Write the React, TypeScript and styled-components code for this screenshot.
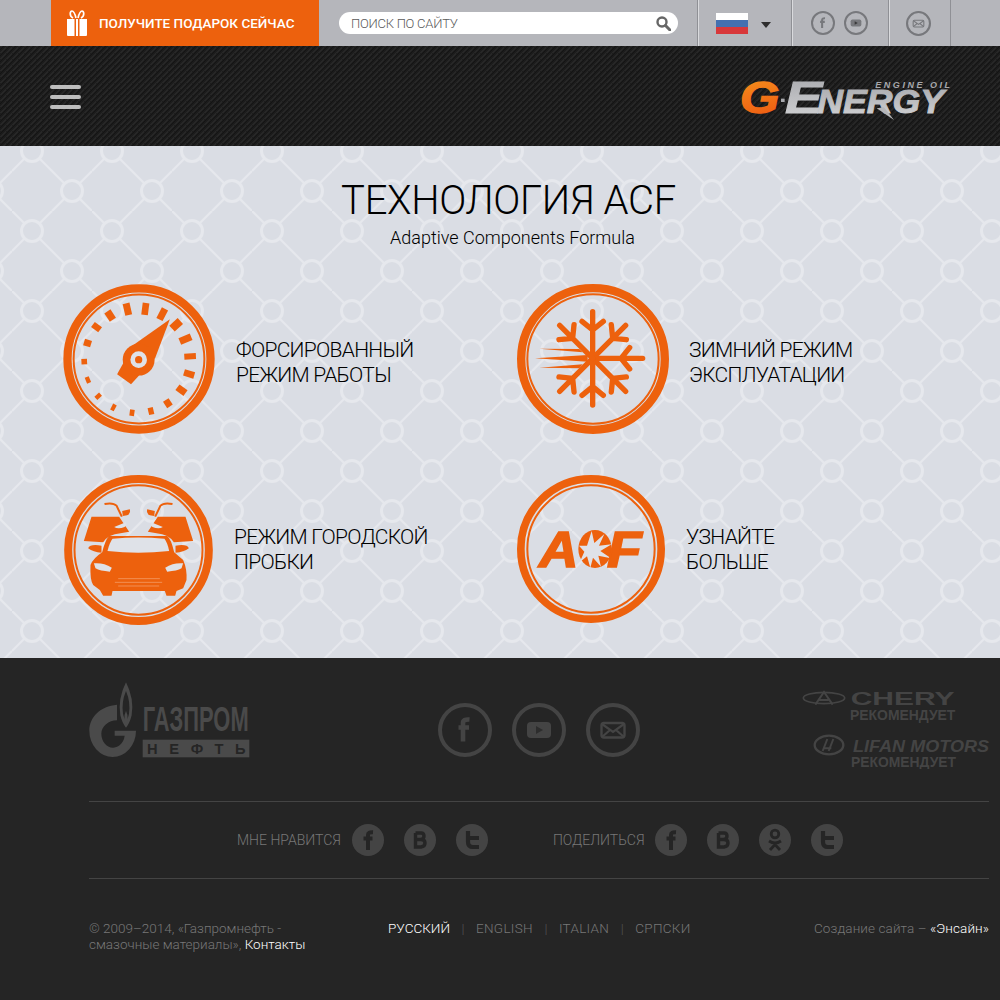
import React from "react";
import styled, { createGlobalStyle } from "styled-components";

const svgUri = (s: string) => `url("data:image/svg+xml,${encodeURIComponent(s)}")`;

const lattice = svgUri(
  `<svg xmlns="http://www.w3.org/2000/svg" width="80" height="80"><g stroke="#e6e8ed" stroke-width="2.2" fill="none"><path d="M0 0L80 80M0 40L40 0M40 80L80 40"/><circle cx="20" cy="20" r="10.5" fill="#dadde4" stroke-width="3"/><circle cx="60" cy="60" r="10.5" fill="#dadde4" stroke-width="3"/></g></svg>`
);

const carbon = svgUri(
  `<svg xmlns="http://www.w3.org/2000/svg" width="6" height="6" shape-rendering="crispEdges"><rect width="6" height="6" fill="#1c1c1c"/><g fill="#272727"><rect x="0" y="0" width="2" height="1"/><rect x="5" y="1" width="2" height="1"/><rect x="4" y="2" width="2" height="1"/><rect x="3" y="3" width="2" height="1"/><rect x="2" y="4" width="2" height="1"/><rect x="1" y="5" width="2" height="1"/></g><g fill="#141414"><rect x="3" y="0" width="1" height="1"/><rect x="2" y="1" width="1" height="1"/><rect x="1" y="2" width="1" height="1"/><rect x="0" y="3" width="1" height="1"/><rect x="5" y="4" width="1" height="1"/><rect x="4" y="5" width="1" height="1"/></g></svg>`
);

const GlobalStyle = createGlobalStyle`
  html, body { margin: 0; padding: 0; background: #252525; }
  body { font-family: "Roboto", "Liberation Sans", sans-serif; }
  * { box-sizing: border-box; }
`;

const Page = styled.div`
  width: 1000px;
  height: 1000px;
  overflow: hidden;
`;

const TopBar = styled.div`
  display: flex;
  height: 46px;
  padding-left: 51px;
  background: #b5b6bb;
`;

const Promo = styled.a`
  display: flex;
  align-items: center;
  gap: 11px;
  width: 268px;
  padding-left: 15px;
  background: #ed610d;
  color: #fff;
  font-size: 13.5px;
  font-weight: 500;
  white-space: nowrap;
`;

const Search = styled.div`
  display: flex;
  align-items: center;
  justify-content: space-between;
  width: 339px;
  height: 22px;
  margin: 12px 19px 0 20px;
  padding: 0 7px 0 12px;
  border-radius: 11px;
  background: #fff;
  color: #5a5a5a;
  font-size: 13px;
  font-weight: 300;
  letter-spacing: -0.25px;
`;

const Cell = styled.div<{ $w: number; $gap?: number }>`
  display: flex;
  align-items: center;
  justify-content: center;
  gap: ${(p) => p.$gap ?? 0}px;
  width: ${(p) => p.$w}px;
  padding-right: 2px;
  border-left: 1px solid #8f9095;
  box-shadow: inset 1px 0 0 #d9dadd;
  color: #77787c;
`;

const EndCell = styled(Cell)`
  border-right: 1px solid #8f9095;
`;

const Flag = styled.div`
  width: 32px;
  height: 21px;
  margin: 0 1px 0 -1px;
  background: linear-gradient(#fff 0 33.3%, #4470b0 33.3% 66.6%, #d8383a 66.6%);
`;

const Caret = styled.div`
  width: 0;
  height: 0;
  margin-top: 3px;
  border-left: 5.5px solid transparent;
  border-right: 5.5px solid transparent;
  border-top: 6px solid #2e2e2e;
`;

const Header = styled.header`
  display: flex;
  align-items: center;
  justify-content: space-between;
  height: 100px;
  padding: 0 40px 0 50px;
  background: #1b1b1b ${carbon};
`;

const Burger = styled.div`
  display: flex;
  flex-direction: column;
  gap: 6px;
  width: 31px;
  margin-top: 2px;
`;

const BurgerBar = styled.span`
  height: 4px;
  border-radius: 2px;
  background: #bdbdbd;
`;

const LogoSvg = styled.svg`
  width: 230px;
  height: 60px;
  margin-top: 8px;
`;

const Main = styled.main`
  height: 512px;
  padding-top: 32px;
  background: #dadde4 ${lattice} 12px -15px;
  color: #000;
  text-align: center;
`;

const Title = styled.h1`
  margin: 0;
  padding-left: 17px;
  font-size: 40px;
  line-height: 46px;
  font-weight: 300;
  letter-spacing: -0.3px;
`;

const Subtitle = styled.p`
  margin: 2px 0 0;
  padding-left: 25px;
  font-size: 18px;
  line-height: 24px;
  font-weight: 300;
`;

const Grid = styled.div`
  display: grid;
  grid-template-columns: 454px 454px;
  row-gap: 41px;
  margin-top: 34px;
  padding-left: 63px;
  text-align: left;
`;

const Feature = styled.div<{ $offset?: number; $gap?: number }>`
  display: flex;
  align-items: center;
  gap: ${(p) => p.$gap ?? 21}px;
  height: 150px;
  margin-left: ${(p) => p.$offset ?? 0}px;
`;

const FeatureLabel = styled.div<{ $drop?: number }>`
  margin-top: ${(p) => p.$drop ?? 0}px;
  font-size: 21px;
  line-height: 25px;
  font-weight: 300;
  letter-spacing: -0.7px;
`;

const AcfSvg = styled.svg`
  width: 148px;
  height: 148px;
  margin-bottom: 2px;
`;

const Footer = styled.footer`
  height: 342px;
  padding: 0 11px 0 89px;
  background: #252525;
  color: #6e6e6e;
`;

const Partners = styled.div`
  display: grid;
  grid-template-columns: 349px 1fr auto;
  height: 144px;
  border-bottom: 1px solid #444;
`;

const GazpromLogo = styled.svg`
  width: 161px;
  height: 76px;
  margin-top: 24px;
`;

const BigSocials = styled.div`
  display: flex;
  gap: 20px;
  margin-top: 45px;
  color: #444;
`;

const Brands = styled.div`
  display: flex;
  flex-direction: column;
  align-items: flex-end;
  width: 190px;
  margin-top: 30px;
  margin-right: -1px;
`;

const CherySvg = styled.svg`
  width: 160px;
  height: 36px;
  margin-right: 30px;
`;

const LifanSvg = styled.svg`
  width: 178px;
  height: 36px;
  margin-top: 9px;
`;

const Shares = styled.div`
  display: flex;
  align-items: center;
  height: 77px;
  padding-left: 148px;
  border-bottom: 1px solid #444;
`;

const ShareLabel = styled.span<{ $left?: number }>`
  margin-left: ${(p) => p.$left ?? 0}px;
  margin-right: 11px;
  font-size: 14px;
  font-weight: 300;
  color: #777;
`;

const Round = styled.span`
  display: flex;
  align-items: center;
  justify-content: center;
  width: 32px;
  height: 32px;
  margin-right: 20px;
  border-radius: 50%;
  background: #444;
  color: #252525;
`;

const Bottom = styled.div`
  display: grid;
  grid-template-columns: 299px 1fr auto;
  padding-top: 41px;
  font-size: 13.5px;
  line-height: 16px;
  font-weight: 300;
  color: #777;
`;

const Copy = styled.div`
  width: 225px;
`;

const Credit = styled.div`
  letter-spacing: 0.1px;
`;

const White = styled.span`
  color: #fff;
`;

const Langs = styled.div`
  display: flex;
  gap: 11.5px;
`;

const Lang = styled.span<{ $active?: boolean }>`
  color: ${(p) => (p.$active ? "#fff" : "#777")};
  letter-spacing: ${(p) => (p.$active ? 0 : 0.3)}px;
`;

const Sep = styled.span`
  color: #555;
`;

const ORANGE = "#ed610d";
const HOLE = "#dfe2e8";

const Ring: React.FC<{ cx: number; cy: number; rx: number; ry: number; band: number; thin: number }> = ({ cx, cy, rx, ry, band, thin }) => (
  <>
    <ellipse cx={cx} cy={cy} rx={rx - band / 2} ry={ry - band / 2} fill="none" stroke={ORANGE} strokeWidth={band} />
    <ellipse cx={cx} cy={cy} rx={rx - thin} ry={ry - thin} fill="none" stroke={ORANGE} strokeWidth={6} />
  </>
);

const ticks: [number, number, number, number][] = [
  [115, 315, 13, 19], [146, 364, 19, 13], [192, 398, 20, 12], [248, 414, 19, 14], [305, 409, 21, 16],
  [356, 385, 23, 20], [397, 346, 30, 21], [420, 297, 32, 20], [423, 244, 35, 18], [409, 192, 37, 21],
  [381, 149, 34, 24], [339, 117, 36, 21], [288, 101, 36, 20], [234, 102, 36, 21], [182, 121, 30, 22],
  [141, 156, 27, 19], [114, 204, 22, 20], [104, 260, 17, 17],
];

const GaugeIcon = () => (
  <svg width={152} height={150} viewBox="40 27 458 450">
    <Ring cx={269} cy={252} rx={228} ry={225} band={25} thin={31} />
    {ticks.map(([x, y, l, w], i) => {
      const a = (Math.atan2(y - 252, x - 268.5) * 180) / Math.PI + 90;
      return <rect key={i} x={x - w / 2} y={y - l / 2} width={w} height={l} fill={ORANGE} transform={`rotate(${a} ${x} ${y})`} />;
    })}
    <polygon points="362,132 318,248 245,328 203,298 252,210" fill={ORANGE} />
    <circle cx={268} cy={254} r={48} fill={ORANGE} />
    <circle cx={268} cy={254} r={25} fill={HOLE} />
    <circle cx={268} cy={254} r={11} fill={ORANGE} />
  </svg>
);

const SnowArm: React.FC<{ angle: number; len?: number }> = ({ angle, len = 140 }) => (
  <g transform={`rotate(${angle} 265 250)`}>
    <path d={`M265 250V${250 - len}M233 139L265 165L297 139`} fill="none" stroke={ORANGE} strokeWidth={16} strokeLinecap="round" strokeLinejoin="round" />
  </g>
);

const SnowIcon = () => (
  <svg width={152} height={150} viewBox="38 27 456 450">
    <Ring cx={266} cy={252} rx={228} ry={225} band={25} thin={31} />
    <SnowArm angle={0} />
    <SnowArm angle={45} />
    <SnowArm angle={90} len={150} />
    <SnowArm angle={135} />
    <SnowArm angle={180} />
    <SnowArm angle={225} />
    <SnowArm angle={315} />
    <polygon points="92,250 250,240 250,260" fill={ORANGE} />
    <polygon points="105,221 225,222 235,232" fill={ORANGE} />
    <polygon points="105,278 235,268 225,280" fill={ORANGE} />
  </svg>
);

const CarDoor = () => (
  <>
    <path d="M125 155H208L238 200L212 205Q175 208 160 232L102 228Z" fill={ORANGE} />
    <path d="M164 117Q190 112 200 122L216 155" fill="none" stroke={ORANGE} strokeWidth={6} />
    <path d="M217 138L240 133Q243 145 232 151L219 153Z" fill={ORANGE} />
    <path d="M193 186L228 172Q233 180 224 186Q205 194 193 186Z" fill={HOLE} />
    <path d="M115 250Q120 236 155 242V263Q130 262 115 250Z" fill={ORANGE} />
  </>
);

const CarIcon = () => (
  <svg width={149} height={150} viewBox="43 30 446 450">
    <Ring cx={266} cy={255} rx={223} ry={225} band={24} thin={31} />
    <CarDoor />
    <g transform="matrix(-1 0 0 1 532 0)">
      <CarDoor />
    </g>
    <path d="M178 213H352Q364 222 373 262L400 285Q412 312 410 345L400 370L380 378L376 392H350L345 378H188L185 392H160L150 375L130 360Q120 345 122 300Q130 280 157 262Q166 225 178 213Z" fill={ORANGE} />
    <path d="M188 221Q265 214 344 221Q354 235 358 258Q265 268 173 258Q178 235 188 221Z" fill={HOLE} />
    <path d="M132 295Q160 292 186 308L180 320Q150 318 137 310Z" fill={HOLE} />
    <path d="M400 295Q372 292 346 308L352 320Q382 318 395 310Z" fill={HOLE} />
    <path d="M205 341H330M195 352H337M205 363H328" fill="none" stroke="#f5a878" strokeWidth={2} />
  </svg>
);

const BURST = "262,196 270,232 300,205 284,240 322,236 288,256 320,278 282,270 290,303 266,276 258,306 248,272 226,290 240,258 224,240 248,240";

const AcfIcon = () => (
  <AcfSvg viewBox="38 28 444 444">
    <Ring cx={260} cy={250} rx={222} ry={222} band={23} thin={31} />
    <text x={104} y={305} fontFamily="Liberation Sans" fontWeight={700} fontStyle="italic" fontSize={152} fill={ORANGE} stroke={ORANGE} strokeWidth={5} textLength={118} lengthAdjust="spacingAndGlyphs">A</text>
    <ellipse cx={272} cy={250} rx={50} ry={57} fill={ORANGE} />
    <polygon points={BURST} fill={HOLE} />
    <text x={308} y={305} fontFamily="Liberation Sans" fontWeight={700} fontStyle="italic" fontSize={152} fill={ORANGE} stroke={ORANGE} strokeWidth={5} textLength={104} lengthAdjust="spacingAndGlyphs">F</text>
  </AcfSvg>
);

const CircleFrame: React.FC<{ size: number; sw: number; children: React.ReactNode }> = ({ size, sw, children }) => (
  <svg width={size} height={size} viewBox="0 0 54 54">
    <circle cx={27} cy={27} r={27 - sw / 2} fill="none" stroke="currentColor" strokeWidth={sw} />
    {children}
  </svg>
);

const FIcon: React.FC<{ size: number; sw: number }> = ({ size, sw }) => (
  <CircleFrame size={size} sw={sw}>
    <path d="M25 38.5V20Q25 16 31.5 16.5M20.5 24.5H31" fill="none" stroke="currentColor" strokeWidth={4.6} />
  </CircleFrame>
);

const YtIcon: React.FC<{ size: number; sw: number }> = ({ size, sw }) => (
  <CircleFrame size={size} sw={sw}>
    <rect x={15} y={19} width={24} height={16} rx={4} fill="currentColor" />
    <polygon points="24,23 24,31 31,27" fill="#252525" fillOpacity={0.75} />
  </CircleFrame>
);

const MailIcon: React.FC<{ size: number; sw: number }> = ({ size, sw }) => (
  <CircleFrame size={size} sw={sw}>
    <rect x={15.5} y={20} width={23} height={14.5} rx={2.5} fill="none" stroke="currentColor" strokeWidth={2.4} />
    <path d="M16 21L27 29L38 21M16 34L24 27M38 34L30 27" fill="none" stroke="currentColor" strokeWidth={2.2} />
  </CircleFrame>
);

const GiftIcon = () => (
  <svg width={22} height={27} viewBox="0 0 22 27">
    <path d="M7 8C3 6 4 1 6 1S9 4 10 8M15 8C19 6 18 1 16 1S13 4 12 8" fill="none" stroke="#fff" strokeWidth={1.7} />
    <path d="M1 9H8.5V26H2Q1 26 1 25ZM10 9H12V26H10ZM13.5 9H21V25Q21 26 20 26H13.5Z" fill="#fff" />
  </svg>
);

const SearchIcon = () => (
  <svg width={15} height={15} viewBox="0 0 15 15">
    <circle cx={6} cy={6} r={4.5} fill="none" stroke="#666" strokeWidth={2.4} />
    <path d="M9.5 9.5L14 14" stroke="#666" strokeWidth={3} strokeLinecap="round" />
  </svg>
);

const SmallF = () => (
  <svg width={14} height={22} viewBox="0 0 14 22">
    <path d="M7 21V6Q7 3 12 3.3M2.5 9.5H11.5" fill="none" stroke="currentColor" strokeWidth={4} />
  </svg>
);

const SmallB = () => (
  <svg width={14} height={18} viewBox="0 0 14 18">
    <path d="M2.5 2H8Q11 2 11 5T8 8.5H2.5M8 8.5Q12 8.5 12 12T8 16H2.5V2" fill="none" stroke="currentColor" strokeWidth={3.4} />
  </svg>
);

const SmallT = () => (
  <svg width={18} height={20} viewBox="0 0 18 20">
    <path d="M5 1V12Q5 17 10 17H16M5 8H16" fill="none" stroke="currentColor" strokeWidth={4.2} />
  </svg>
);

const SmallOk = () => (
  <svg width={16} height={24} viewBox="0 0 16 24">
    <circle cx={8} cy={6} r={3.8} fill="none" stroke="currentColor" strokeWidth={2.8} />
    <path d="M2 13Q8 17 14 13M8 15V17M3 22L8 16.5L13 22" fill="none" stroke="currentColor" strokeWidth={2.8} />
  </svg>
);

const GEnergyLogo = () => (
  <LogoSvg viewBox="0 0 690 180">
    <defs>
      <linearGradient id="gOrange" x1="0" y1="0" x2="0.2" y2="1">
        <stop offset="0" stopColor="#f6941d" />
        <stop offset="1" stopColor="#ee5d12" />
      </linearGradient>
      <linearGradient id="gSteel" x1="0" y1="0" x2="0" y2="1">
        <stop offset="0" stopColor="#a7a8ac" />
        <stop offset="1" stopColor="#d2d3d5" />
      </linearGradient>
    </defs>
    <text x={30} y={128} fontFamily="Liberation Sans" fontWeight={700} fontStyle="italic" fontSize={132} fill="url(#gOrange)" stroke="url(#gOrange)" strokeWidth={4} textLength={118} lengthAdjust="spacingAndGlyphs">G</text>
    <rect x={153} y={86} width={11} height={10} fill="#a7a8ac" />
    <text x={165} y={128} fontFamily="Liberation Sans" fontWeight={700} fontStyle="italic" fontSize={132} fill="url(#gSteel)" stroke="url(#gSteel)" strokeWidth={3} textLength={112} lengthAdjust="spacingAndGlyphs">E</text>
    <text x={262} y={128} fontFamily="Liberation Sans" fontWeight={700} fontStyle="italic" fontSize={98} fill="url(#gSteel)" stroke="url(#gSteel)" strokeWidth={3} textLength={380} lengthAdjust="spacingAndGlyphs">NERGY</text>
    <polygon points="440,115 492,150 462,112" fill="#b5b6b9" />
    <text x={436} y={55} fontFamily="Liberation Sans" fontWeight={700} fontStyle="italic" fontSize={27} fill="#a7a8ac" textLength={224} lengthAdjust="spacing">ENGINE OIL</text>
  </LogoSvg>
);

const GazpromMark = () => (
  <GazpromLogo viewBox="57 35 481 228">
    <path d="M167 36Q192 85 184 135Q178 160 167 172Q156 160 150 135Q142 85 167 36Z M167 62Q153 95 158 130Q161 145 167 150Q173 145 176 130Q181 95 167 62Z" fill="#4a4a4a" fillRule="evenodd" />
    <path d="M167 122Q160 135 162 150L167 170L172 150Q174 135 167 122Z" fill="#4a4a4a" />
    <path d="M140 103C90 108 57 140 57 181A70 79 0 0 0 197 181H133V196H163C160 222 140 232 128 232C108 232 93 212 93 190C93 168 115 150 140 150Z" fill="#4a4a4a" />
    <text x={217} y={182} fontFamily="Liberation Sans Narrow, Liberation Sans" fontWeight={700} fontSize={104} fill="#4a4a4a" textLength={318} lengthAdjust="spacingAndGlyphs">ГАЗПРОМ</text>
    <rect x={217} y={208} width={320} height={53} fill="#4a4a4a" />
    <text x={230} y={252} fontFamily="Liberation Sans Narrow, Liberation Sans" fontWeight={700} fontSize={44} fill="#252525" textLength={296} lengthAdjust="spacing">НЕФТЬ</text>
  </GazpromLogo>
);

const CheryLogo = () => (
  <CherySvg viewBox="0 0 480 108">
    <ellipse cx={72} cy={30} rx={62} ry={17} fill="none" stroke="#444" strokeWidth={5} />
    <path d="M46 50L72 12L98 50M58 36H86" fill="none" stroke="#444" strokeWidth={6} />
    <text x={152} y={51} fontFamily="Liberation Sans" fontWeight={700} fontSize={54} fill="#444" textLength={312} lengthAdjust="spacingAndGlyphs">CHERY</text>
    <text x={150} y={96} fontFamily="Liberation Sans" fontWeight={700} fontSize={42} fill="#444" textLength={316} lengthAdjust="spacingAndGlyphs">РЕКОМЕНДУЕТ</text>
  </CherySvg>
);

const LifanLogo = () => (
  <LifanSvg viewBox="0 0 534 108">
    <ellipse cx={51} cy={36} rx={43} ry={28} fill="none" stroke="#444" strokeWidth={7} />
    <path d="M32 54L46 18M50 54L64 18M34 46H58" fill="none" stroke="#444" strokeWidth={6} />
    <text x={123} y={57} fontFamily="Liberation Sans" fontWeight={700} fontStyle="italic" fontSize={50} fill="#444" textLength={408} lengthAdjust="spacingAndGlyphs">LIFAN MOTORS</text>
    <text x={117} y={102} fontFamily="Liberation Sans" fontWeight={700} fontSize={42} fill="#444" textLength={315} lengthAdjust="spacingAndGlyphs">РЕКОМЕНДУЕТ</text>
  </LifanSvg>
);

export default function App() {
  return (
    <Page>
      <GlobalStyle />
      <TopBar>
        <Promo>
          <GiftIcon />
          ПОЛУЧИТЕ ПОДАРОК СЕЙЧАС
        </Promo>
        <Search>
          ПОИСК ПО САЙТУ
          <SearchIcon />
        </Search>
        <Cell $w={94} $gap={12}>
          <Flag />
          <Caret />
        </Cell>
        <Cell $w={97} $gap={9}>
          <FIcon size={24} sw={4.5} />
          <YtIcon size={24} sw={4.5} />
        </Cell>
        <EndCell $w={63}>
          <MailIcon size={25} sw={4.5} />
        </EndCell>
      </TopBar>
      <Header>
        <Burger>
          <BurgerBar />
          <BurgerBar />
          <BurgerBar />
        </Burger>
        <GEnergyLogo />
      </Header>
      <Main>
        <Title>ТЕХНОЛОГИЯ ACF</Title>
        <Subtitle>Adaptive Components Formula</Subtitle>
        <Grid>
          <Feature>
            <GaugeIcon />
            <FeatureLabel $drop={8}>
              ФОРСИРОВАННЫЙ
              <br />
              РЕЖИМ РАБОТЫ
            </FeatureLabel>
          </Feature>
          <Feature $gap={20}>
            <SnowIcon />
            <FeatureLabel $drop={8}>
              ЗИМНИЙ РЕЖИМ
              <br />
              ЭКСПЛУАТАЦИИ
            </FeatureLabel>
          </Feature>
          <Feature $offset={1}>
            <CarIcon />
            <FeatureLabel>
              РЕЖИМ ГОРОДСКОЙ
              <br />
              ПРОБКИ
            </FeatureLabel>
          </Feature>
          <Feature>
            <AcfIcon />
            <FeatureLabel>
              УЗНАЙТЕ
              <br />
              БОЛЬШЕ
            </FeatureLabel>
          </Feature>
        </Grid>
      </Main>
      <Footer>
        <Partners>
          <GazpromMark />
          <BigSocials>
            <FIcon size={54} sw={4} />
            <YtIcon size={54} sw={4} />
            <MailIcon size={54} sw={4} />
          </BigSocials>
          <Brands>
            <CheryLogo />
            <LifanLogo />
          </Brands>
        </Partners>
        <Shares>
          <ShareLabel>МНЕ НРАВИТСЯ</ShareLabel>
          <Round><SmallF /></Round>
          <Round><SmallB /></Round>
          <Round><SmallT /></Round>
          <ShareLabel $left={45}>ПОДЕЛИТЬСЯ</ShareLabel>
          <Round><SmallF /></Round>
          <Round><SmallB /></Round>
          <Round><SmallOk /></Round>
          <Round><SmallT /></Round>
        </Shares>
        <Bottom>
          <Copy>
            © 2009–2014, «Газпромнефть - смазочные материалы», <White>Контакты</White>
          </Copy>
          <Langs>
            <Lang $active>РУССКИЙ</Lang>
            <Sep>|</Sep>
            <Lang>ENGLISH</Lang>
            <Sep>|</Sep>
            <Lang>ITALIAN</Lang>
            <Sep>|</Sep>
            <Lang>СРПСКИ</Lang>
          </Langs>
          <Credit>
            Создание сайта – <White>«Энсайн»</White>
          </Credit>
        </Bottom>
      </Footer>
    </Page>
  );
}
